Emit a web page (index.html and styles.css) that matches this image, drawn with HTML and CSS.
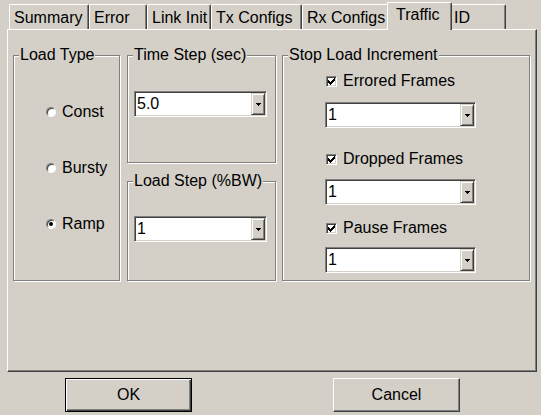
FILE: index.html
```html
<!DOCTYPE html>
<html>
<head>
<meta charset="utf-8">
<link rel="stylesheet" href="styles.css">
</head>
<body>
<div class="dialog">
  <div class="tabs">
    <div class="tab w-summary">Summary</div>
    <div class="tab w-error">Error</div>
    <div class="tab w-link">Link Init</div>
    <div class="tab w-tx">Tx Configs</div>
    <div class="tab w-rx">Rx Configs</div>
    <div class="tab selected w-traffic">Traffic</div>
    <div class="tab w-id">ID</div>
  </div>
  <div class="panel">
    <div class="group load-type">
      <div class="legend">Load Type</div>
      <div class="radio-row first"><span class="radio"></span>Const</div>
      <div class="radio-row"><span class="radio"></span>Bursty</div>
      <div class="radio-row"><span class="radio checked"></span>Ramp</div>
    </div>
    <div class="middle">
      <div class="group time-step">
        <div class="legend">Time Step (sec)</div>
        <div class="combo small"><span class="value">5.0</span><span class="drop"><svg width="5" height="3" viewBox="0 0 5 3" shape-rendering="crispEdges"><rect x="0" y="0" width="5" height="1"/><rect x="1" y="1" width="3" height="1"/><rect x="2" y="2" width="1" height="1"/></svg></span></div>
      </div>
      <div class="group load-step">
        <div class="legend">Load Step (%BW)</div>
        <div class="combo small"><span class="value">1</span><span class="drop"><svg width="5" height="3" viewBox="0 0 5 3" shape-rendering="crispEdges"><rect x="0" y="0" width="5" height="1"/><rect x="1" y="1" width="3" height="1"/><rect x="2" y="2" width="1" height="1"/></svg></span></div>
      </div>
    </div>
    <div class="group stop">
      <div class="legend">Stop Load Increment</div>
      <div class="check-row r1"><span class="check"><svg width="7" height="7" viewBox="0 0 7 7" shape-rendering="crispEdges"><path d="M0 2h1v1h1v1h1v-1h1v-1h1v-1h1v-1h1v3h-1v1h-1v1h-1v1h-1v1h-1v-1h-1v-1h-1v-1h-1z"/></svg></span>Errored Frames</div>
      <div class="combo wide c1"><span class="value">1</span><span class="drop"><svg width="5" height="3" viewBox="0 0 5 3" shape-rendering="crispEdges"><rect x="0" y="0" width="5" height="1"/><rect x="1" y="1" width="3" height="1"/><rect x="2" y="2" width="1" height="1"/></svg></span></div>
      <div class="check-row r2"><span class="check"><svg width="7" height="7" viewBox="0 0 7 7" shape-rendering="crispEdges"><path d="M0 2h1v1h1v1h1v-1h1v-1h1v-1h1v-1h1v3h-1v1h-1v1h-1v1h-1v1h-1v-1h-1v-1h-1v-1h-1z"/></svg></span>Dropped Frames</div>
      <div class="combo wide c2"><span class="value">1</span><span class="drop"><svg width="5" height="3" viewBox="0 0 5 3" shape-rendering="crispEdges"><rect x="0" y="0" width="5" height="1"/><rect x="1" y="1" width="3" height="1"/><rect x="2" y="2" width="1" height="1"/></svg></span></div>
      <div class="check-row r3"><span class="check"><svg width="7" height="7" viewBox="0 0 7 7" shape-rendering="crispEdges"><path d="M0 2h1v1h1v1h1v-1h1v-1h1v-1h1v-1h1v3h-1v1h-1v1h-1v1h-1v1h-1v-1h-1v-1h-1v-1h-1z"/></svg></span>Pause Frames</div>
      <div class="combo wide c3"><span class="value">1</span><span class="drop"><svg width="5" height="3" viewBox="0 0 5 3" shape-rendering="crispEdges"><rect x="0" y="0" width="5" height="1"/><rect x="1" y="1" width="3" height="1"/><rect x="2" y="2" width="1" height="1"/></svg></span></div>
    </div>
  </div>
  <div class="buttons">
    <div class="btn default">OK</div>
    <div class="btn cancel">Cancel</div>
  </div>
</div>
</body>
</html>
```
FILE: styles.css
```css
html, body {
  margin: 0;
  padding: 0;
  background: #d4d0c8;
}
body {
  font-family: "Liberation Sans", Arial, sans-serif;
  font-size: 16px;
  color: #000;
}
.dialog {
  width: 541px;
  height: 415px;
  overflow: hidden;
}

/* tabs */
.tabs {
  display: flex;
  align-items: flex-end;
  height: 29px;
  padding-left: 9px;
}
.tab {
  box-sizing: border-box;
  height: 25px;
  line-height: 18px;
  padding: 4px 0 0 4px;
  border-top: 1px solid #fff;
  border-left: 1px solid #fff;
  border-right: 1px solid #404040;
  border-top-left-radius: 2px;
  border-top-right-radius: 2px;
  box-shadow: inset -1px 0 #808080;
  background: #d4d0c8;
  white-space: nowrap;
}
.w-summary { width: 80px; }
.w-error { width: 58px; }
.w-link { width: 64px; }
.w-tx { width: 91px; }
.w-rx { width: 87px; }
.w-traffic { width: 61px; }
.w-id { width: 56px; padding-left: 3px; }
.tab.selected {
  width: 65px;
  height: 28px;
  margin: 0 -2px -1px -2px;
  padding-left: 8px;
  padding-top: 3px;
  z-index: 1;
}

/* panel */
.panel {
  box-sizing: border-box;
  margin-left: 7px;
  width: 530px;
  height: 343px;
  border-top: 1px solid #fff;
  border-left: 1px solid #fff;
  border-right: 1px solid #404040;
  border-bottom: 1px solid #404040;
  box-shadow: inset -1px -1px #808080;
  padding: 25px 0 0 5px;
  display: flex;
  align-items: flex-start;
}

/* group boxes */
.group {
  box-sizing: border-box;
  border: 1px solid #808080;
  box-shadow: inset 1px 1px #fff, 1px 1px #fff;
  display: flex;
  flex-direction: column;
  align-items: flex-start;
}
.legend {
  margin: -10px 0 0 5px;
  padding: 0 1px;
  height: 18px;
  line-height: 18px;
  background: #d4d0c8;
  white-space: nowrap;
}
.load-type {
  width: 107px;
  height: 226px;
  margin-right: 7px;
}
.middle {
  width: 149px;
  margin-right: 6px;
  display: flex;
  flex-direction: column;
}
.time-step {
  height: 108px;
}
.load-step {
  height: 100px;
  margin-top: 18px;
}
.stop {
  width: 248px;
  height: 226px;
}

/* radios */
.radio-row {
  display: flex;
  align-items: center;
  height: 18px;
  line-height: 18px;
  padding-left: 32px;
  margin-top: 38px;
}
.radio-row.first {
  margin-top: 39px;
}
.radio {
  box-sizing: border-box;
  width: 10px;
  height: 10px;
  border-radius: 50%;
  border: 1px solid;
  border-color: #808080 #fff #fff #808080;
  background: #fff;
  box-shadow: inset 1px 1px #404040;
  margin-right: 6px;
  display: flex;
  align-items: center;
  justify-content: center;
}
.radio.checked::after {
  content: "";
  width: 4px;
  height: 4px;
  border-radius: 50%;
  background: #000;
}

/* combo */
.combo {
  box-sizing: border-box;
  height: 26px;
  border: 1px solid;
  border-color: #808080 #fff #fff #808080;
  box-shadow: inset 1px 1px #404040, inset -1px -1px #d4d0c8;
  background: #fff;
  display: flex;
  align-items: center;
  padding: 1px;
}
.combo .value {
  flex: 1;
  padding-left: 1px;
  line-height: 18px;
}
.combo .drop {
  box-sizing: border-box;
  width: 14px;
  align-self: stretch;
  background: #d4d0c8;
  border: 1px solid;
  border-color: #d4d0c8 #404040 #404040 #d4d0c8;
  box-shadow: inset 1px 1px #fff, inset -1px -1px #808080;
  display: flex;
  align-items: center;
  justify-content: center;
}
.combo .drop svg {
  display: block;
  margin-top: 1px;
}
.combo.small {
  width: 133px;
  margin-left: 6px;
}
.time-step .combo { margin-top: 27px; }
.load-step .combo { margin-top: 26px; }
.combo.wide {
  width: 151px;
  margin-left: 42px;
}
.c1 { margin-top: 12px; }
.c2 { margin-top: 11px; }
.c3 { margin-top: 10px; }

/* checkboxes */
.check-row {
  display: flex;
  align-items: center;
  height: 18px;
  line-height: 18px;
  margin-left: 43px;
}
.r1 { margin-top: 8px; }
.r2 { margin-top: 22px; }
.r3 { margin-top: 14px; }
.check {
  box-sizing: border-box;
  width: 11px;
  height: 11px;
  border: 1px solid;
  border-color: #808080 #fff #fff #808080;
  box-shadow: inset 1px 1px #404040, inset -1px -1px #d4d0c8;
  background: #fff;
  margin-right: 6px;
  display: flex;
  align-items: center;
  justify-content: center;
}
.check svg { display: block; }

/* buttons */
.buttons {
  display: flex;
  padding-left: 65px;
  margin-top: 6px;
}
.btn {
  box-sizing: border-box;
  width: 127px;
  height: 34px;
  display: flex;
  align-items: center;
  justify-content: center;
  background: #d4d0c8;
}
.btn.default {
  border: 1px solid #000;
  box-shadow: inset 1px 1px #fff, inset -1px -1px #404040, inset -2px -2px #808080;
}
.btn.cancel {
  margin-left: 141px;
  border-top: 1px solid #fff;
  border-left: 1px solid #fff;
  border-right: 1px solid #404040;
  border-bottom: 1px solid #404040;
  box-shadow: inset -1px -1px #808080;
}
```
